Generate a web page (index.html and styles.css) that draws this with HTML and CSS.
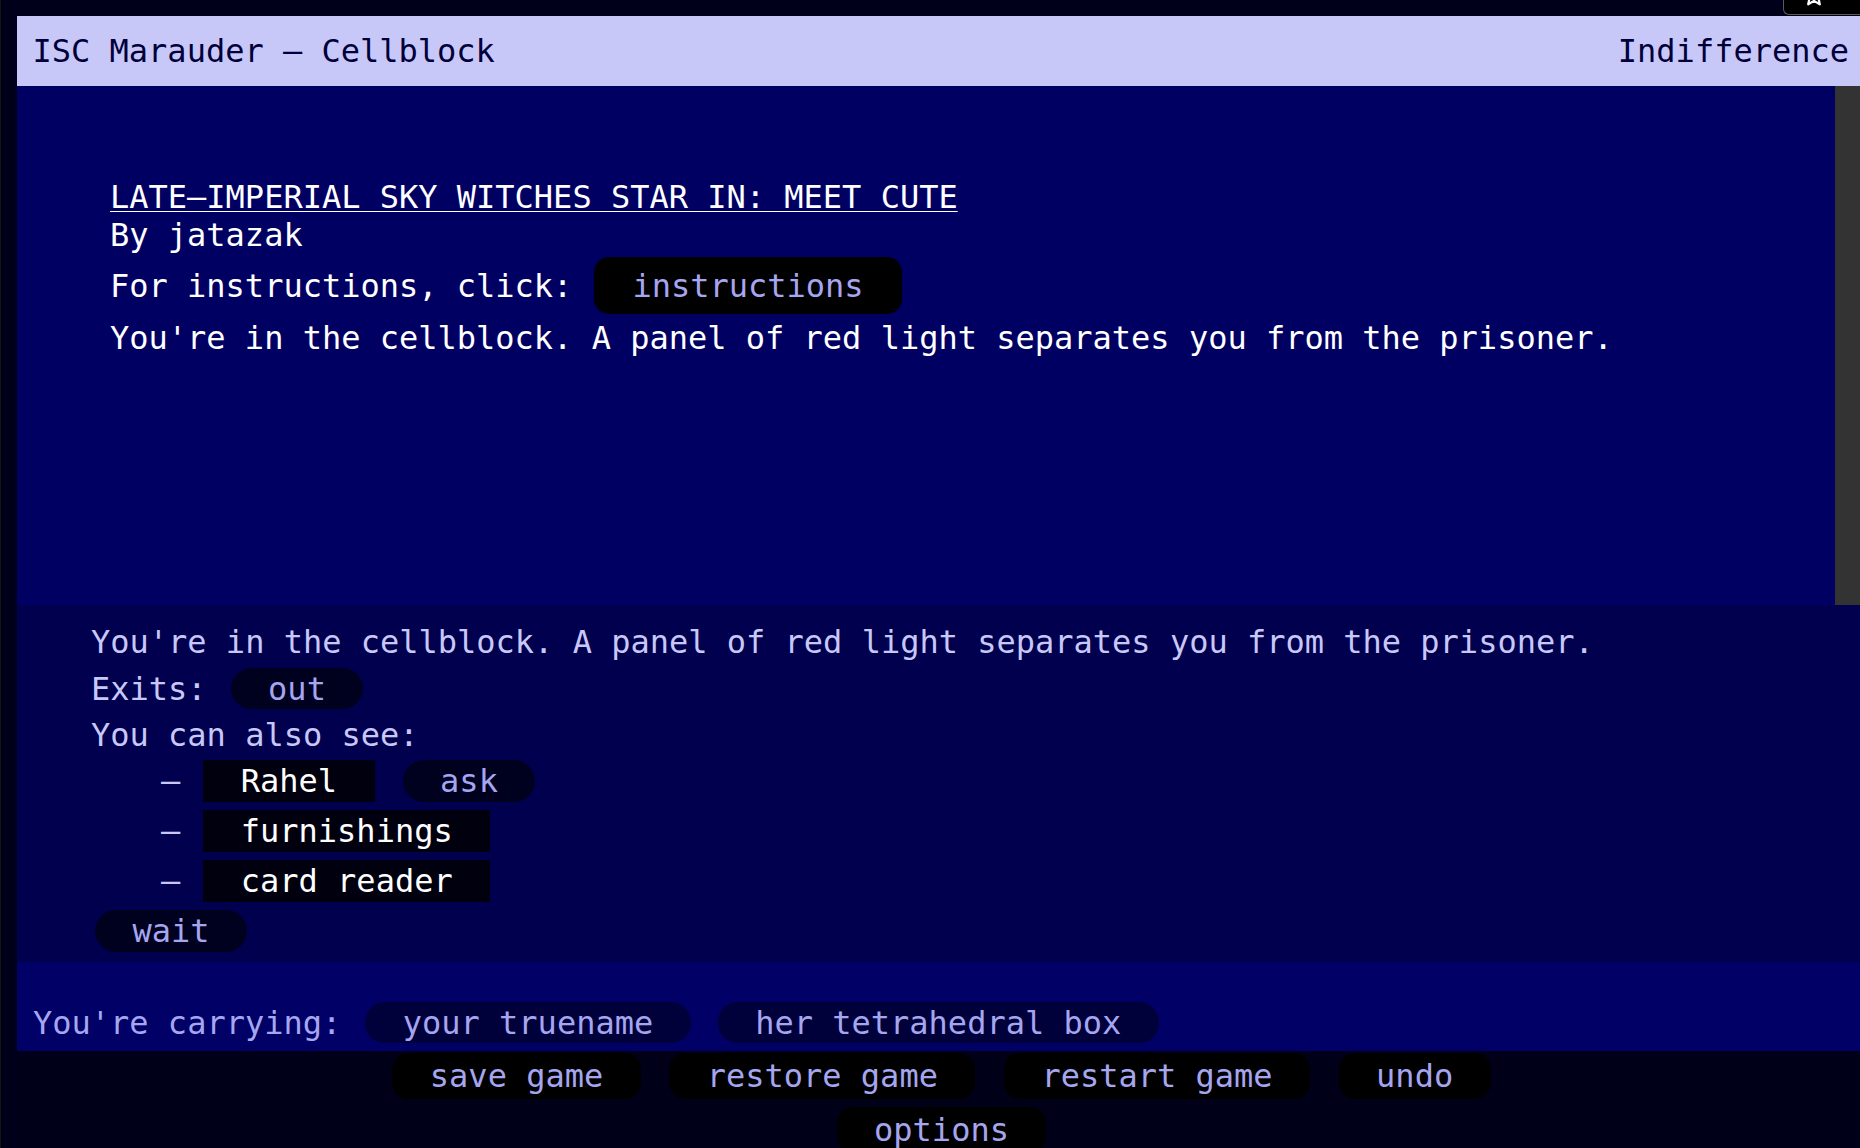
FILE: index.html
```html
<!DOCTYPE html>
<html lang="en">
<head>
<meta charset="utf-8">
<title>ISC Marauder – Cellblock</title>
<link rel="stylesheet" href="styles.css">
</head>
<body>
<div class="frame">
  <div class="tab">
    <svg class="tab-icon" width="22" height="22" viewBox="0 0 22 22"><path d="M11 1.5 L13.8 7.6 L20.4 8.3 L15.4 12.7 L16.8 19.3 L11 15.9 L5.2 19.3 L6.6 12.7 L1.6 8.3 L8.2 7.6 Z" fill="none" stroke="#ffffff" stroke-width="2.2" stroke-linejoin="round"/></svg>
  </div>
  <header class="status">
    <span>ISC Marauder – Cellblock</span>
    <span>Indifference</span>
  </header>
  <div class="story-wrap">
    <div class="story">
      <div class="title">LATE–IMPERIAL SKY WITCHES STAR IN: MEET CUTE</div>
      <div class="line">By jatazak</div>
      <div class="instr-row"><span>For instructions, click:</span><span class="btn-instr">instructions</span></div>
      <div class="line">You're in the cellblock. A panel of red light separates you from the prisoner.</div>
    </div>
    <div class="scrollbar"></div>
  </div>
  <section class="room">
    <div class="r-line">You're in the cellblock. A panel of red light separates you from the prisoner.</div>
    <div class="r-line">Exits:<span class="pill pill-gap">out</span></div>
    <div class="r-line">You can also see:</div>
    <div class="item first"><span class="dash">–</span><span class="obj">Rahel</span><span class="pill pill-ask">ask</span></div>
    <div class="item"><span class="dash">–</span><span class="obj">furnishings</span></div>
    <div class="item"><span class="dash">–</span><span class="obj">card reader</span></div>
    <div class="wait-row"><span class="pill">wait</span></div>
  </section>
  <section class="carry">
    <span class="carry-label">You're carrying:</span>
    <span class="carry-btn first">your truename</span>
    <span class="carry-btn">her tetrahedral box</span>
  </section>
  <nav class="toolbar">
    <div class="tool-row">
      <span class="tool-btn">save game</span>
      <span class="tool-btn">restore game</span>
      <span class="tool-btn">restart game</span>
      <span class="tool-btn">undo</span>
    </div>
    <div class="tool-row">
      <span class="tool-btn">options</span>
    </div>
  </nav>
</div>
</body>
</html>
```
FILE: styles.css
```css
html, body {
  margin: 0;
  padding: 0;
}
body {
  background: #00001a;
  width: 1860px;
  height: 1148px;
  overflow: hidden;
  font-family: "DejaVu Sans Mono", monospace;
  font-size: 32px;
  border-left: 1px solid #16160c;
  box-sizing: border-box;
}
.frame {
  position: relative;
  padding: 16px 0 0 16px;
  height: 1148px;
  box-sizing: border-box;
}
.tab {
  position: absolute;
  top: 0;
  right: 0;
  width: 76px;
  height: 14px;
  background: #000000;
  border-left: 1px solid #5a5a5a;
  border-bottom: 1px solid #5a5a5a;
  border-bottom-left-radius: 6px;
  overflow: hidden;
}
.tab-icon {
  position: absolute;
  left: 19px;
  top: -15px;
}
.status {
  height: 70px;
  background: #c8c8f8;
  color: #00003a;
  display: flex;
  justify-content: space-between;
  align-items: center;
  padding: 0 11px 0 15.5px;
  line-height: 38px;
}
.story-wrap {
  display: flex;
  height: 519px;
}
.story {
  flex: 1;
  background: #000062;
  color: #ffffff;
  padding: 92px 0 0 93px;
}
.scrollbar {
  width: 25px;
  background: #333333;
}
.title {
  line-height: 38px;
  text-decoration: underline;
  text-decoration-thickness: 1px;
  text-underline-offset: 3px;
}
.line {
  line-height: 38px;
}
.instr-row {
  display: flex;
  align-items: center;
  height: 57px;
  margin: 3px 0 5px;
}
.btn-instr {
  display: flex;
  align-items: center;
  height: 57px;
  padding: 0 38px;
  margin-left: 22px;
  border-radius: 15px;
  background: #000000;
  color: #a6a6f0;
}
.room {
  background: #00004e;
  color: #c8c8f8;
  padding: 14px 0 10px 74px;
}
.r-line {
  height: 46.5px;
  display: flex;
  align-items: center;
}
.pill {
  display: flex;
  align-items: center;
  height: 41px;
  padding: 0 37.5px;
  border-radius: 21px;
  background: #00001f;
  color: #a6a6f0;
}
.pill-gap {
  margin-left: 24px;
}
.pill-ask {
  height: 42px;
  margin-left: 28px;
}
.item {
  display: flex;
  align-items: center;
  height: 42px;
  padding-left: 70px;
  margin-top: 8px;
}
.item.first {
  margin-top: 1.5px;
}
.dash {
  color: #c8c8f8;
}
.obj {
  display: flex;
  align-items: center;
  height: 42px;
  padding: 0 37.5px;
  margin-left: 23px;
  background: #00000e;
  color: #ffffff;
}
.wait-row {
  display: flex;
  margin-top: 8px;
  padding-left: 4px;
}
.wait-row .pill {
  height: 42px;
}
.carry {
  background: #000066;
  color: #a6a6f0;
  height: 89px;
  box-sizing: border-box;
  padding: 40px 0 0 16px;
  display: flex;
  align-items: flex-start;
}
.carry-label {
  height: 41px;
  display: flex;
  align-items: center;
}
.carry-btn {
  display: flex;
  align-items: center;
  height: 41px;
  padding: 0 37.5px;
  margin-left: 27px;
  border-radius: 20px;
  background: #00003a;
}
.carry-btn.first {
  margin-left: 24px;
}
.toolbar {
  background: #000018;
  padding: 2px 0 0 6px;
  height: 97px;
  box-sizing: border-box;
  display: flex;
  flex-direction: column;
  gap: 8px;
  overflow: hidden;
}
.tool-row {
  display: flex;
  justify-content: center;
  gap: 28.5px;
}
.tool-btn {
  display: flex;
  align-items: center;
  height: 46px;
  padding: 0 37.5px;
  border-radius: 16px;
  background: #000000;
  color: #a6a6f0;
  flex: none;
}
```
